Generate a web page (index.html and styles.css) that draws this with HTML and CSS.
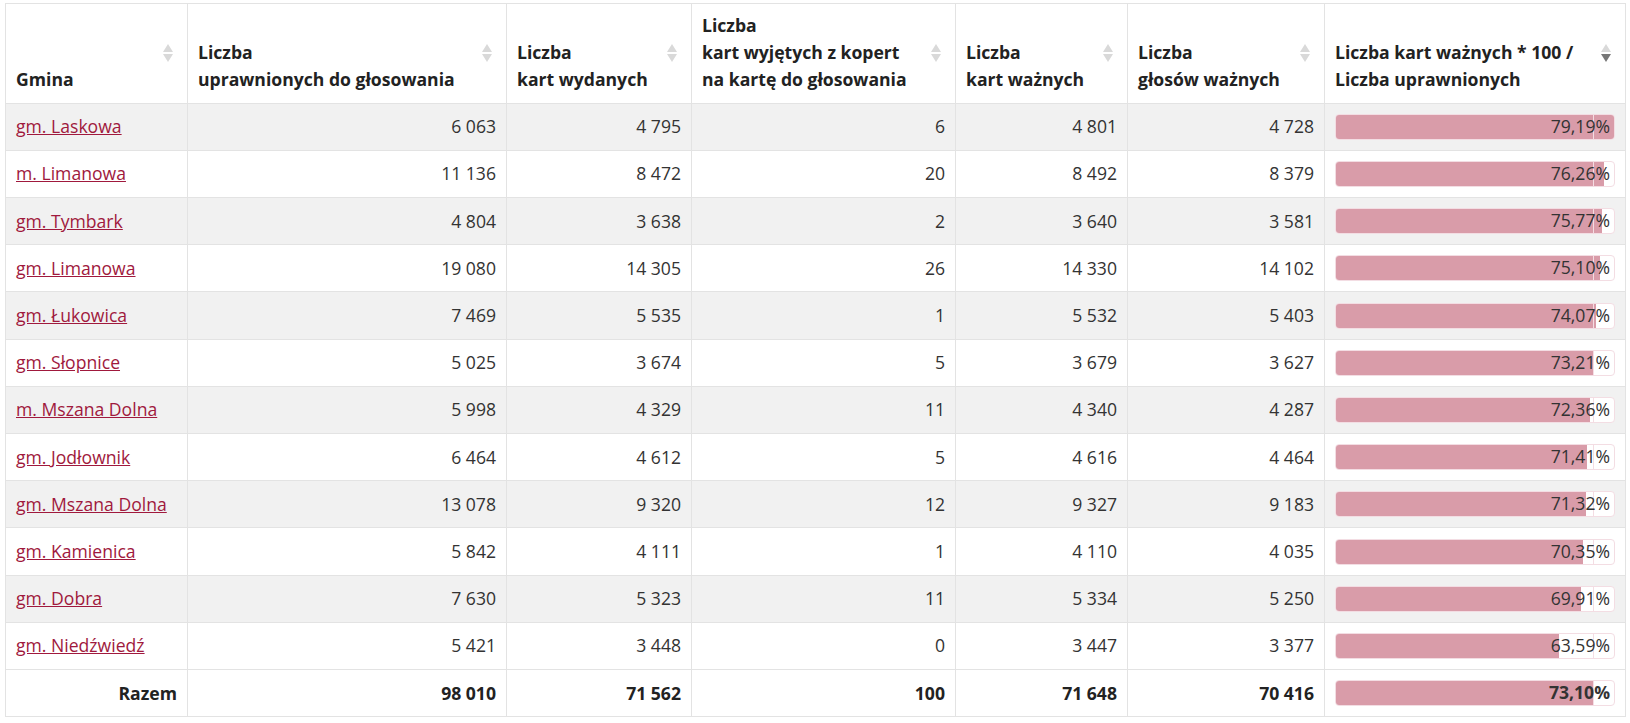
FILE: index.html
```html
<!DOCTYPE html>
<html lang="pl">
<head>
<meta charset="utf-8">
<title>Frekwencja</title>
<link rel="stylesheet" href="styles.css">
</head>
<body>
<div class="wrap">
<table class="results">
  <colgroup>
    <col class="w-gmina">
    <col class="w-upr">
    <col class="w-wyd">
    <col class="w-wyj">
    <col class="w-kw">
    <col class="w-gw">
    <col class="w-pct">
  </colgroup>
  <thead>
    <tr>
      <th class="left">Gmina<span class="sort"><i class="up"></i><i class="down"></i></span></th>
      <th>Liczba<br>uprawnionych do głosowania<span class="sort"><i class="up"></i><i class="down"></i></span></th>
      <th>Liczba<br>kart wydanych<span class="sort"><i class="up"></i><i class="down"></i></span></th>
      <th>Liczba<br>kart wyjętych z kopert<br>na kartę do głosowania<span class="sort"><i class="up"></i><i class="down"></i></span></th>
      <th>Liczba<br>kart ważnych<span class="sort"><i class="up"></i><i class="down"></i></span></th>
      <th>Liczba<br>głosów ważnych<span class="sort"><i class="up"></i><i class="down"></i></span></th>
      <th>Liczba kart ważnych * 100 / Liczba uprawnionych<span class="sort"><i class="up"></i><i class="down active"></i></span></th>
    </tr>
  </thead>
  <tbody>
    <tr><td class="left"><a href="#">gm. Laskowa</a></td><td>6 063</td><td>4 795</td><td>6</td><td>4 801</td><td>4 728</td><td class="barcell"><div class="bar"><div class="fill" style="width:100%"></div><div class="mark"></div><span class="val">79,19%</span></div></td></tr>
    <tr><td class="left"><a href="#">m. Limanowa</a></td><td>11 136</td><td>8 472</td><td>20</td><td>8 492</td><td>8 379</td><td class="barcell"><div class="bar"><div class="fill" style="width:96.30%"></div><div class="mark"></div><span class="val">76,26%</span></div></td></tr>
    <tr><td class="left"><a href="#">gm. Tymbark</a></td><td>4 804</td><td>3 638</td><td>2</td><td>3 640</td><td>3 581</td><td class="barcell"><div class="bar"><div class="fill" style="width:95.68%"></div><div class="mark"></div><span class="val">75,77%</span></div></td></tr>
    <tr><td class="left"><a href="#">gm. Limanowa</a></td><td>19 080</td><td>14 305</td><td>26</td><td>14 330</td><td>14 102</td><td class="barcell"><div class="bar"><div class="fill" style="width:94.84%"></div><div class="mark"></div><span class="val">75,10%</span></div></td></tr>
    <tr><td class="left"><a href="#">gm. Łukowica</a></td><td>7 469</td><td>5 535</td><td>1</td><td>5 532</td><td>5 403</td><td class="barcell"><div class="bar"><div class="fill" style="width:93.53%"></div><div class="mark"></div><span class="val">74,07%</span></div></td></tr>
    <tr><td class="left"><a href="#">gm. Słopnice</a></td><td>5 025</td><td>3 674</td><td>5</td><td>3 679</td><td>3 627</td><td class="barcell"><div class="bar"><div class="fill" style="width:92.45%"></div><div class="mark"></div><span class="val">73,21%</span></div></td></tr>
    <tr><td class="left"><a href="#">m. Mszana Dolna</a></td><td>5 998</td><td>4 329</td><td>11</td><td>4 340</td><td>4 287</td><td class="barcell"><div class="bar"><div class="fill" style="width:91.38%"></div><div class="mark"></div><span class="val">72,36%</span></div></td></tr>
    <tr><td class="left"><a href="#">gm. Jodłownik</a></td><td>6 464</td><td>4 612</td><td>5</td><td>4 616</td><td>4 464</td><td class="barcell"><div class="bar"><div class="fill" style="width:90.18%"></div><div class="mark"></div><span class="val">71,41%</span></div></td></tr>
    <tr><td class="left"><a href="#">gm. Mszana Dolna</a></td><td>13 078</td><td>9 320</td><td>12</td><td>9 327</td><td>9 183</td><td class="barcell"><div class="bar"><div class="fill" style="width:90.06%"></div><div class="mark"></div><span class="val">71,32%</span></div></td></tr>
    <tr><td class="left"><a href="#">gm. Kamienica</a></td><td>5 842</td><td>4 111</td><td>1</td><td>4 110</td><td>4 035</td><td class="barcell"><div class="bar"><div class="fill" style="width:88.84%"></div><div class="mark"></div><span class="val">70,35%</span></div></td></tr>
    <tr><td class="left"><a href="#">gm. Dobra</a></td><td>7 630</td><td>5 323</td><td>11</td><td>5 334</td><td>5 250</td><td class="barcell"><div class="bar"><div class="fill" style="width:88.28%"></div><div class="mark"></div><span class="val">69,91%</span></div></td></tr>
    <tr><td class="left"><a href="#">gm. Niedźwiedź</a></td><td>5 421</td><td>3 448</td><td>0</td><td>3 447</td><td>3 377</td><td class="barcell"><div class="bar"><div class="fill" style="width:80.30%"></div><div class="mark"></div><span class="val">63,59%</span></div></td></tr>
  </tbody>
  <tfoot>
    <tr><td>Razem</td><td>98 010</td><td>71 562</td><td>100</td><td>71 648</td><td>70 416</td><td class="barcell"><div class="bar"><div class="fill" style="width:92.31%"></div><div class="mark"></div><span class="val">73,10%</span></div></td></tr>
  </tfoot>
</table>
</div>
</body>
</html>
```
FILE: styles.css
```css
html, body {
  margin: 0;
  padding: 0;
  background: #fff;
}
body {
  font-family: "Open Sans", "Liberation Sans", sans-serif;
  font-size: 17.6px;
  line-height: 27.2px;
  color: #333;
}
.wrap {
  padding: 3px 5px;
}
.results {
  border-collapse: collapse;
  table-layout: fixed;
  width: 1620px;
}
.w-gmina { width: 182px; }
.w-upr { width: 319px; }
.w-wyd { width: 185px; }
.w-wyj { width: 264px; }
.w-kw { width: 172px; }
.w-gw { width: 197px; }
.w-pct { width: 301px; }

.results th,
.results td {
  border: 1px solid #e3e3e3;
}
.results th {
  position: relative;
  text-align: left;
  vertical-align: bottom;
  font-weight: 700;
  color: #222;
  padding: 8px 34px 9px 10px;
}
.results td {
  text-align: right;
  vertical-align: middle;
  padding: 9.5px 10px;
  white-space: nowrap;
}
.results td.left {
  text-align: left;
}
.results tbody tr:nth-child(odd) td {
  background: #f1f1f1;
}
.results a {
  color: #a0193d;
  text-decoration: underline;
}
.results tfoot td {
  font-weight: 700;
  color: #222;
}

.sort {
  position: absolute;
  right: 14px;
  top: 50%;
  transform: translateY(-50%);
  display: flex;
  flex-direction: column;
  gap: 2px;
}
.sort i {
  display: block;
  width: 0;
  height: 0;
  border-left: 5px solid transparent;
  border-right: 5px solid transparent;
}
.sort .up {
  border-bottom: 8px solid #d9d9d9;
}
.sort .down {
  border-top: 8px solid #d9d9d9;
}
.sort .down.active {
  border-top-color: #777;
}

.barcell {
  padding: 9.5px 10px;
}
.bar {
  position: relative;
  height: 26px;
  border: 1px solid #f3dde3;
  border-radius: 4px;
  background: #fff;
  overflow: hidden;
  box-sizing: border-box;
}
.fill {
  position: absolute;
  left: 0;
  top: 0;
  bottom: 0;
  background: #d99ca9;
}
.mark {
  position: absolute;
  top: 0;
  bottom: 0;
  left: 92.31%;
  width: 1px;
  background: #f4dde3;
}
.val {
  position: absolute;
  right: 4px;
  top: 50%;
  transform: translateY(-50%);
  line-height: 1;
  color: #333;
}
```
